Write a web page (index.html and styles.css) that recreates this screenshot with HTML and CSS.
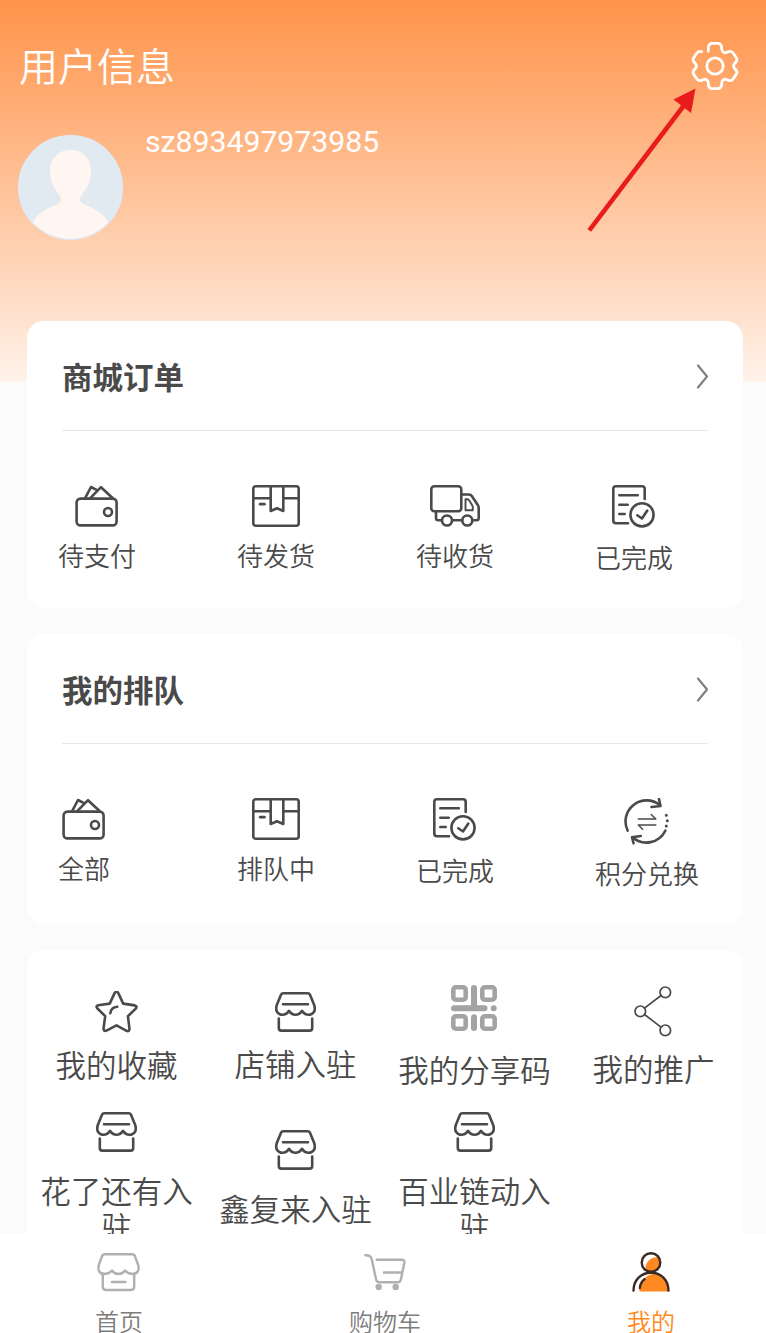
FILE: index.html
```html
<!DOCTYPE html>
<html lang="zh-CN">
<head>
  <meta charset="UTF-8">
  <title>用户信息</title>
  <link rel="stylesheet" href="styles.css">
</head>
<body>
  <!-- shared icons -->
  <svg class="sprite">
    <symbol id="wallet" viewBox="0 0 44 42">
      <rect x="1.6" y="13.6" width="40" height="26.8" rx="4"/>
      <circle cx="33" cy="27" r="4"/>
      <path d="M10 13.3L16 2l6 3.2M15 13.3L26 2.2l11.8 11.1"/>
    </symbol>
    <symbol id="box" viewBox="0 0 48 42">
      <rect x="1.3" y="1.3" width="45.4" height="39.4" rx="2.5"/>
      <path d="M1.3 13.3h17.4M31.3 13.3h15.4M18.7 1.3V26l6.3-2.8 6.3 2.8V1.3"/>
      <path d="M8.2 19.2h4.2" stroke-width="2.8"/>
    </symbol>
    <symbol id="truck" viewBox="0 0 50 42">
      <rect x="1.3" y="1.3" width="30" height="25" rx="3"/>
      <path d="M31.3 9.5h7.5q2 0 3 1.5l6 9q.9 1.3.9 3V33q0 2.3-2.3 2.3H43M32 35.3H22.3M11.8 35.3H8.3Q6 35.3 6 33v-6.5"/>
      <path d="M35.5 14.3h1.8q1.3 0 2 1.2l3 5q.5.8.5 2v2.8h-7.3z" stroke-width="1.9"/>
      <circle cx="17" cy="35.5" r="5"/>
      <circle cx="37.3" cy="35.5" r="5"/>
    </symbol>
    <symbol id="done" viewBox="0 0 43 44" preserveAspectRatio="xMinYMid meet">
      <path d="M32.7 14V4q0-2.7-2.7-2.7H4Q1.3 1.3 1.3 4v31.6q0 2.7 2.7 2.7h12"/>
      <path d="M7.3 10.3h18.5M7.3 19.7h8.4M7.3 29h5.4"/>
      <circle cx="30" cy="29.8" r="11.6"/>
      <path d="M25.3 30.3l4.7 3.2 5.3-8"/>
    </symbol>
    <symbol id="exchange" viewBox="0 0 46 47" preserveAspectRatio="xMinYMid meet">
      <path d="M4.7 32.7A21 21 0 0 1 37 7.3M36 1l1.5 7-9 1M42.3 32.7A21 21 0 0 1 9.5 39.3M17.8 38L9 39.3l1.5 6"/>
      <path d="M15.3 21h17.5l-4.6-4.5M32.8 27H15.3l4.3 4.3" stroke-width="1.5"/>
      <path d="M43.3 17.3h.01M44.3 22.7h.01M43.3 28h.01" stroke-width="3"/>
    </symbol>
    <symbol id="star" viewBox="0 0 43 42">
      <path d="M19.7 1.9q1.8-2.4 3.5 0l5 10.7 11.5 1.8q3 .8 1 3.2l-7.8 7.6 1.6 12.7q-.2 3-3 1.9l-10-5.4-10 5.2q-2.9 1-3-1.9l1.7-12.6-8-7.8q-1.7-2.2 1-3l11.5-1.7z"/>
      <path d="M15.3 22.3q.7-6 7-6.6"/>
    </symbol>
    <symbol id="shop" viewBox="0 0 41 40">
      <path d="M8.3 1.3h24.4q1.7 0 2.3 1.5l4 9.7C41.5 19.5 37.5 22.8 33.5 22.8Q29.5 22.8 27 18.8Q24.500 22.8 20.500 22.8Q16.500 22.8 14 18.8Q11.500 22.8 7.500 22.8C3.5 22.8-.5 19.5 2 12.500l4-9.7q.6-1.500 2.3-1.500z"/>
      <path d="M8 12.3h25M3.800 26.500v9.500q0 2.600 2.600 2.600h28.200q2.600 0 2.600-2.600V26.500"/>
    </symbol>
    <symbol id="chevron" viewBox="0 0 12 25">
      <path d="M2 1.5l9 11-9 11"/>
    </symbol>
  </svg>

  <div class="page">
    <div class="header">
      <div class="header-top">
        <h1 class="header-title">用户信息</h1>
        <svg class="settings" width="48" height="48" viewBox="0 0 48 48">
          <path d="M17.3 9.3V6.5Q17.3 1.3 21.5 1.3h5q4.2 0 4.2 5.2C30.7 10 33 11.5 36 10.3Q40 8 42.3 11.3L45.3 15.8Q47 18.8 44 21Q41.2 24 44 27Q47 29.2 45.3 32.2L42.3 36.7Q40 40 36 37.7C33 36.5 30.7 38 30.7 41.5Q30.7 46.7 26.5 46.7h-5Q17.3 46.7 17.3 41.5C17.3 38 15 36.5 12 37.7Q8 40 5.7 36.7L2.7 32.2Q1 29.2 4 27Q6.8 24 4 21Q1 18.8 2.7 15.8L5.7 11.3Q7.7 8.7 10.7 9.6"/>
          <circle cx="24" cy="24" r="8.2"/>
        </svg>
      </div>
      <div class="user">
        <svg class="avatar" width="105" height="105" viewBox="0 0 105 105">
          <defs>
            <clipPath id="avatarClip"><circle cx="52.5" cy="52.5" r="51.2"/></clipPath>
          </defs>
          <circle class="avatar-bg" cx="52.5" cy="52.5" r="51.8"/>
          <path class="avatar-person" clip-path="url(#avatarClip)" d="M52.5 15C40 15 32 24 32 36c0 11 5 19 9.5 24 2.5 4 1.500 7.500-1.500 9C28 73.500 17 80 14 89v16h77V89c-3-9-14-15.500-26-20-3-1.500-4-5-1.500-9C68 55 73 47 73 36c0-12-8-21-20.500-21z"/>
        </svg>
        <div class="user-name">sz893497973985</div>
      </div>
      <svg class="pointer" width="110" height="146" viewBox="0 0 110 146">
        <path d="M2.3 142.3L98 16" stroke-width="4.6"/>
        <path class="pointer-head" d="M108.5 0.5l-4.5 24.5-17.5-13.5z"/>
      </svg>
    </div>

    <div class="content">
      <div class="card">
        <div class="card-head">
          <h2 class="card-title">商城订单</h2>
          <svg class="chevron" width="12" height="25"><use href="#chevron"/></svg>
        </div>
        <div class="menu">
          <div class="menu-item">
            <svg class="icon" width="44" height="42"><use href="#wallet"/></svg>
            <span>待支付</span>
          </div>
          <div class="menu-item">
            <svg class="icon" width="48" height="42"><use href="#box"/></svg>
            <span>待发货</span>
          </div>
          <div class="menu-item">
            <svg class="icon" width="50" height="42"><use href="#truck"/></svg>
            <span>待收货</span>
          </div>
          <div class="menu-item">
            <svg class="icon" width="45" height="44"><use href="#done"/></svg>
            <span>已完成</span>
          </div>
        </div>
      </div>

      <div class="card">
        <div class="card-head">
          <h2 class="card-title">我的排队</h2>
          <svg class="chevron" width="12" height="25"><use href="#chevron"/></svg>
        </div>
        <div class="menu">
          <div class="menu-item">
            <svg class="icon" width="44" height="42"><use href="#wallet"/></svg>
            <span>全部</span>
          </div>
          <div class="menu-item">
            <svg class="icon" width="48" height="42"><use href="#box"/></svg>
            <span>排队中</span>
          </div>
          <div class="menu-item">
            <svg class="icon" width="45" height="44"><use href="#done"/></svg>
            <span>已完成</span>
          </div>
          <div class="menu-item">
            <svg class="icon" width="48" height="47"><use href="#exchange"/></svg>
            <span>积分兑换</span>
          </div>
        </div>
      </div>

      <div class="card tools">
        <div class="tool tool-near">
          <svg class="icon" width="43" height="42"><use href="#star"/></svg>
          <span>我的收藏</span>
        </div>
        <div class="tool tool-near">
          <svg class="icon" width="41" height="40"><use href="#shop"/></svg>
          <span>店铺入驻</span>
        </div>
        <div class="tool">
          <svg class="icon icon-qr" width="48" height="46" viewBox="0 0 48 46">
            <rect x="2.3" y="2.3" width="12.4" height="12.4" rx="2.5"/>
            <rect x="31.3" y="2.3" width="12.4" height="12.4" rx="2.5"/>
            <rect x="2.3" y="31.3" width="12.4" height="12.4" rx="2.5"/>
            <rect x="31.3" y="31.3" width="12.4" height="12.4" rx="2.5"/>
            <path d="M23 3v20M3 23.3h30.5M42.7 23.3h.01M23 32.3V43" stroke-width="6"/>
          </svg>
          <span>我的分享码</span>
        </div>
        <div class="tool tool-near">
          <svg class="icon icon-share" width="40" height="51" viewBox="0 0 40 51">
            <circle cx="31.3" cy="6.3" r="5.3"/>
            <circle cx="6.3" cy="25.3" r="5.3"/>
            <circle cx="31.3" cy="44.3" r="5.3"/>
            <path d="M10.5 22.1L27 9.5M10.5 28.5L27 41.1"/>
          </svg>
          <span>我的推广</span>
        </div>
        <div class="tool">
          <svg class="icon" width="41" height="40"><use href="#shop"/></svg>
          <span>花了还有入驻</span>
        </div>
        <div class="tool">
          <svg class="icon" width="41" height="40"><use href="#shop"/></svg>
          <span>鑫复来入驻</span>
        </div>
        <div class="tool">
          <svg class="icon" width="41" height="40"><use href="#shop"/></svg>
          <span>百业链动入驻</span>
        </div>
      </div>
    </div>
  </div>

  <div class="tabbar">
    <div class="tab">
      <svg class="tab-icon" width="45" height="40" viewBox="0 0 45 40">
        <path d="M8 2.3h27q2.3 0 3 2l3 8.2C43 18.5 40 22 36 22Q31 22 28 18.5Q25.5 22 21.5 22Q17.5 22 15 18.5Q12 22 7 22C3 22 0 18.5 2 12.5l3-8.2q.7-2 3-2z"/>
        <path d="M5.8 21.5V34.5q0 3.5 3.5 3.5h24.4q3.5 0 3.5-3.5V21.5M15 30h13.5"/>
      </svg>
      <span>首页</span>
    </div>
    <div class="tab">
      <svg class="tab-icon" width="43" height="40" viewBox="0 0 43 40">
        <path d="M1.3 3.3c4.7.2 5.7.7 6.5 4.2l4.3 20q.6 2.8 3.4 2.8H33.5q2.8 0 3.4-2.8L40.3 11q.6-3.3-2.8-3.3H12.7M20 20.5h17.5"/>
        <circle class="wheel" cx="14.7" cy="35" r="3.2"/>
        <circle class="wheel" cx="31.7" cy="35" r="3.2"/>
      </svg>
      <span>购物车</span>
    </div>
    <div class="tab active">
      <svg class="tab-icon" width="38" height="40" viewBox="0 0 38 40">
        <path class="fill" d="M27 5.5C20 4 13 9.500 13.500 17.500A9.300 9.300 0 0 0 27 5.500zM7.500 39.500C7 30 14 22.500 22 22c9 1.500 14 8.500 14.500 17.500z"/>
        <circle cx="19" cy="10.5" r="9.3"/>
        <path d="M1.5 38.5C1.7 28 9 20.8 19 20.8S36.3 28 36.5 38.5M7.9 36q.4-5.5 4.6-8.700"/>
      </svg>
      <span>我的</span>
    </div>
  </div>
</body>
</html>
```

FILE: styles.css
```css
* {
  box-sizing: border-box;
}

body {
  margin: 0;
  height: 1333px;
  display: flex;
  flex-direction: column;
  overflow: hidden;
  background: #fbfbfb;
  color: #4a4a4a;
  font-family: Roboto, "Noto Sans CJK SC", sans-serif;
  font-weight: 350;
}

svg {
  display: block;
  flex-shrink: 0;
  fill: none;
  stroke-linecap: round;
  stroke-linejoin: round;
}

.sprite {
  display: none;
}

.page {
  flex: 1;
  min-height: 0;
  overflow: hidden;
}

.header {
  position: relative;
  height: 382px;
  padding: 42px 27px 0 18px;
  background: linear-gradient(#ff9349, #fff2ea);
  color: #fff;
}

.header-top {
  display: flex;
  justify-content: space-between;
  height: 93px;
}

.header-title {
  margin: 1px 0 0 1px;
  font-size: 39px;
  font-weight: 350;
  line-height: 50px;
}

.settings {
  stroke: #fff;
  stroke-width: 2.8;
}

.user {
  display: flex;
}

.avatar-bg {
  fill: #e2eaf1;
  stroke: #deebfb;
  stroke-width: 1.4;
}

.avatar-person {
  fill: #fff6f1;
}

.user-name {
  margin: -11px 0 0 22px;
  font-size: 30.2px;
  font-weight: 400;
  line-height: 36px;
}

.pointer {
  position: absolute;
  left: 587px;
  top: 88px;
  stroke: #e91c1c;
  stroke-linecap: butt;
}

.pointer-head {
  fill: #e91c1c;
  stroke: none;
}

.content {
  position: relative;
  display: flex;
  flex-direction: column;
  gap: 26px;
  margin: -61px 23px 0 27px;
}

.card {
  background: #fff;
  border-radius: 17px;
}

.card-head {
  display: flex;
  align-items: center;
  justify-content: space-between;
  height: 110px;
  margin: 0 35px;
  border-bottom: 1px solid #e8e8e8;
}

.card-title {
  margin: 7px 0 0;
  font-size: 30.5px;
  font-weight: 700;
  line-height: 36px;
}

.chevron {
  margin-top: 1px;
  stroke: #808080;
  stroke-width: 2.2;
}

.menu {
  display: grid;
  grid-template-columns: repeat(4, 179px);
  padding: 54px 0 32px 31px;
  margin-right: -31px;
}

.menu-item {
  display: flex;
  flex-direction: column;
  align-items: center;
  justify-self: start;
  gap: 13px;
  font-size: 26px;
  line-height: 34px;
}

.icon {
  stroke: #4a4a4a;
  stroke-width: 2.6;
}

.icon-qr {
  stroke: #a3a3a3;
  stroke-width: 4.6;
}

.icon-share {
  stroke-width: 1.7;
}

.tools {
  display: grid;
  grid-template-columns: repeat(4, 179px);
  row-gap: 22px;
  align-items: center;
  padding: 35px 0;
}

.tool {
  display: flex;
  flex-direction: column;
  align-items: center;
  gap: 23px;
  font-size: 30.5px;
  line-height: 36px;
  text-align: center;
}

.tool-near {
  gap: 16px;
}

.tabbar {
  display: flex;
  justify-content: space-between;
  height: 99px;
  padding: 18px 91px 0 95px;
  background: #fff;
  color: #7d7d7d;
}

.tab {
  display: flex;
  flex-direction: column;
  align-items: center;
  gap: 17px;
  font-size: 24px;
  line-height: 28px;
}

.tab-icon {
  stroke: #b0b0b0;
  stroke-width: 2.4;
}

.wheel {
  fill: #b0b0b0;
  stroke: none;
}

.active {
  color: #ff8820;
}

.active .tab-icon {
  stroke: #3a2a26;
}

.active .fill {
  fill: #ff8820;
  stroke: none;
}
```
